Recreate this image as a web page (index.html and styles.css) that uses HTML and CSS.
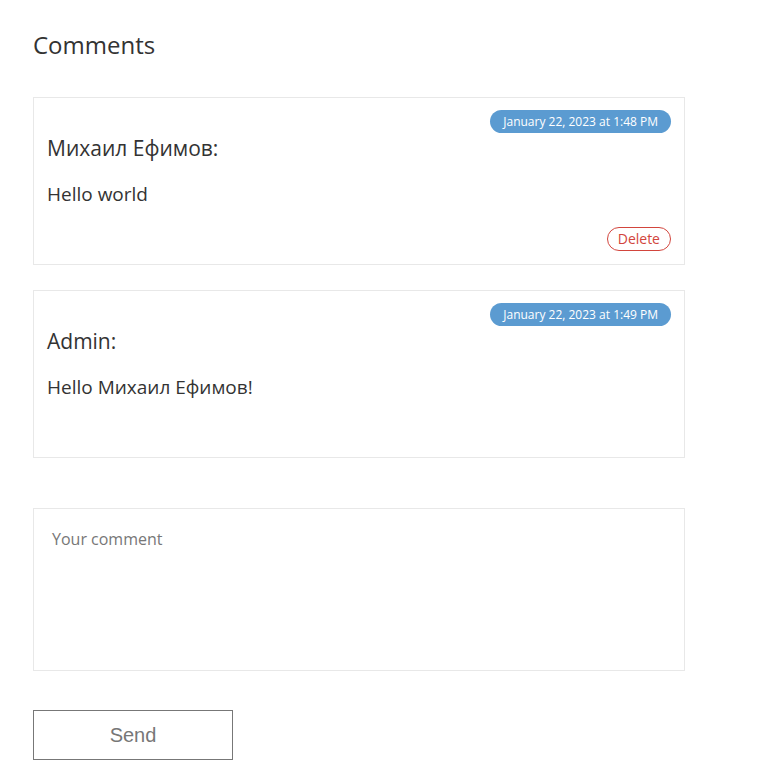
FILE: index.html
```html
<!DOCTYPE html>
<html lang="en">
<head>
<meta charset="utf-8">
<title>Comments</title>
<link rel="stylesheet" href="styles.css">
</head>
<body>
<div class="page">
  <h2 class="title">Comments</h2>
  <div class="comment">
    <div class="date"><span class="badge">January 22, 2023 at 1:48 PM</span></div>
    <div class="author">Михаил Ефимов:</div>
    <div class="text">Hello world</div>
    <div class="actions"><button class="delete">Delete</button></div>
  </div>
  <div class="comment">
    <div class="date"><span class="badge">January 22, 2023 at 1:49 PM</span></div>
    <div class="author">Admin:</div>
    <div class="text">Hello Михаил Ефимов!</div>
  </div>
  <textarea class="input" placeholder="Your comment"></textarea>
  <button class="send">Send</button>
</div>
</body>
</html>
```
FILE: styles.css
```css
* { box-sizing: border-box; }
body {
  margin: 0;
  background: #fff;
  font-family: "Open Sans", "Noto Sans", sans-serif;
  color: #333;
}
.page {
  padding: 30px 0 20px 33px;
  width: 685px;
  display: flex;
  flex-direction: column;
}
.title {
  margin: 0 0 37px 0;
  font-size: 24px;
  font-weight: 400;
  line-height: 30px;
  color: #333;
}
.comment {
  border: 1px solid #e8e8e8;
  min-height: 168px;
  padding: 12px 13px 13px 13px;
  margin-bottom: 25px;
  display: flex;
  flex-direction: column;
}
.date { display: flex; justify-content: flex-end; }
.badge {
  background: #5b9bd1;
  color: #fff;
  font-size: 12px;
  line-height: 23px;
  height: 23px;
  padding: 0 13px;
  border-radius: 12px;
}
.author {
  font-size: 21px;
  line-height: 28px;
  margin-top: 1px;
}
.text {
  font-size: 19px;
  line-height: 26px;
  margin-top: 19px;
}
.actions {
  margin-top: auto;
  display: flex;
  justify-content: flex-end;
}
.delete {
  font-family: inherit;
  font-size: 14px;
  color: #d2453d;
  background: #fff;
  border: 1px solid #d2453d;
  border-radius: 12px;
  height: 24px;
  padding: 0 10px;
  line-height: 20px;
}
.input {
  margin-top: 25px;
  height: 163px;
  width: 652px;
  border: 1px solid #e8e8e8;
  padding: 19px 18px;
  font-family: "Open Sans", sans-serif;
  font-size: 16px;
  resize: none;
  color: #333;
}
.input::placeholder { color: #777; }
.send {
  margin-top: 39px;
  width: 200px;
  height: 50px;
  background: #fff;
  border: 1px solid #777;
  font-family: "Liberation Sans", Arial, sans-serif;
  font-size: 20px;
  color: #777;
}
```
